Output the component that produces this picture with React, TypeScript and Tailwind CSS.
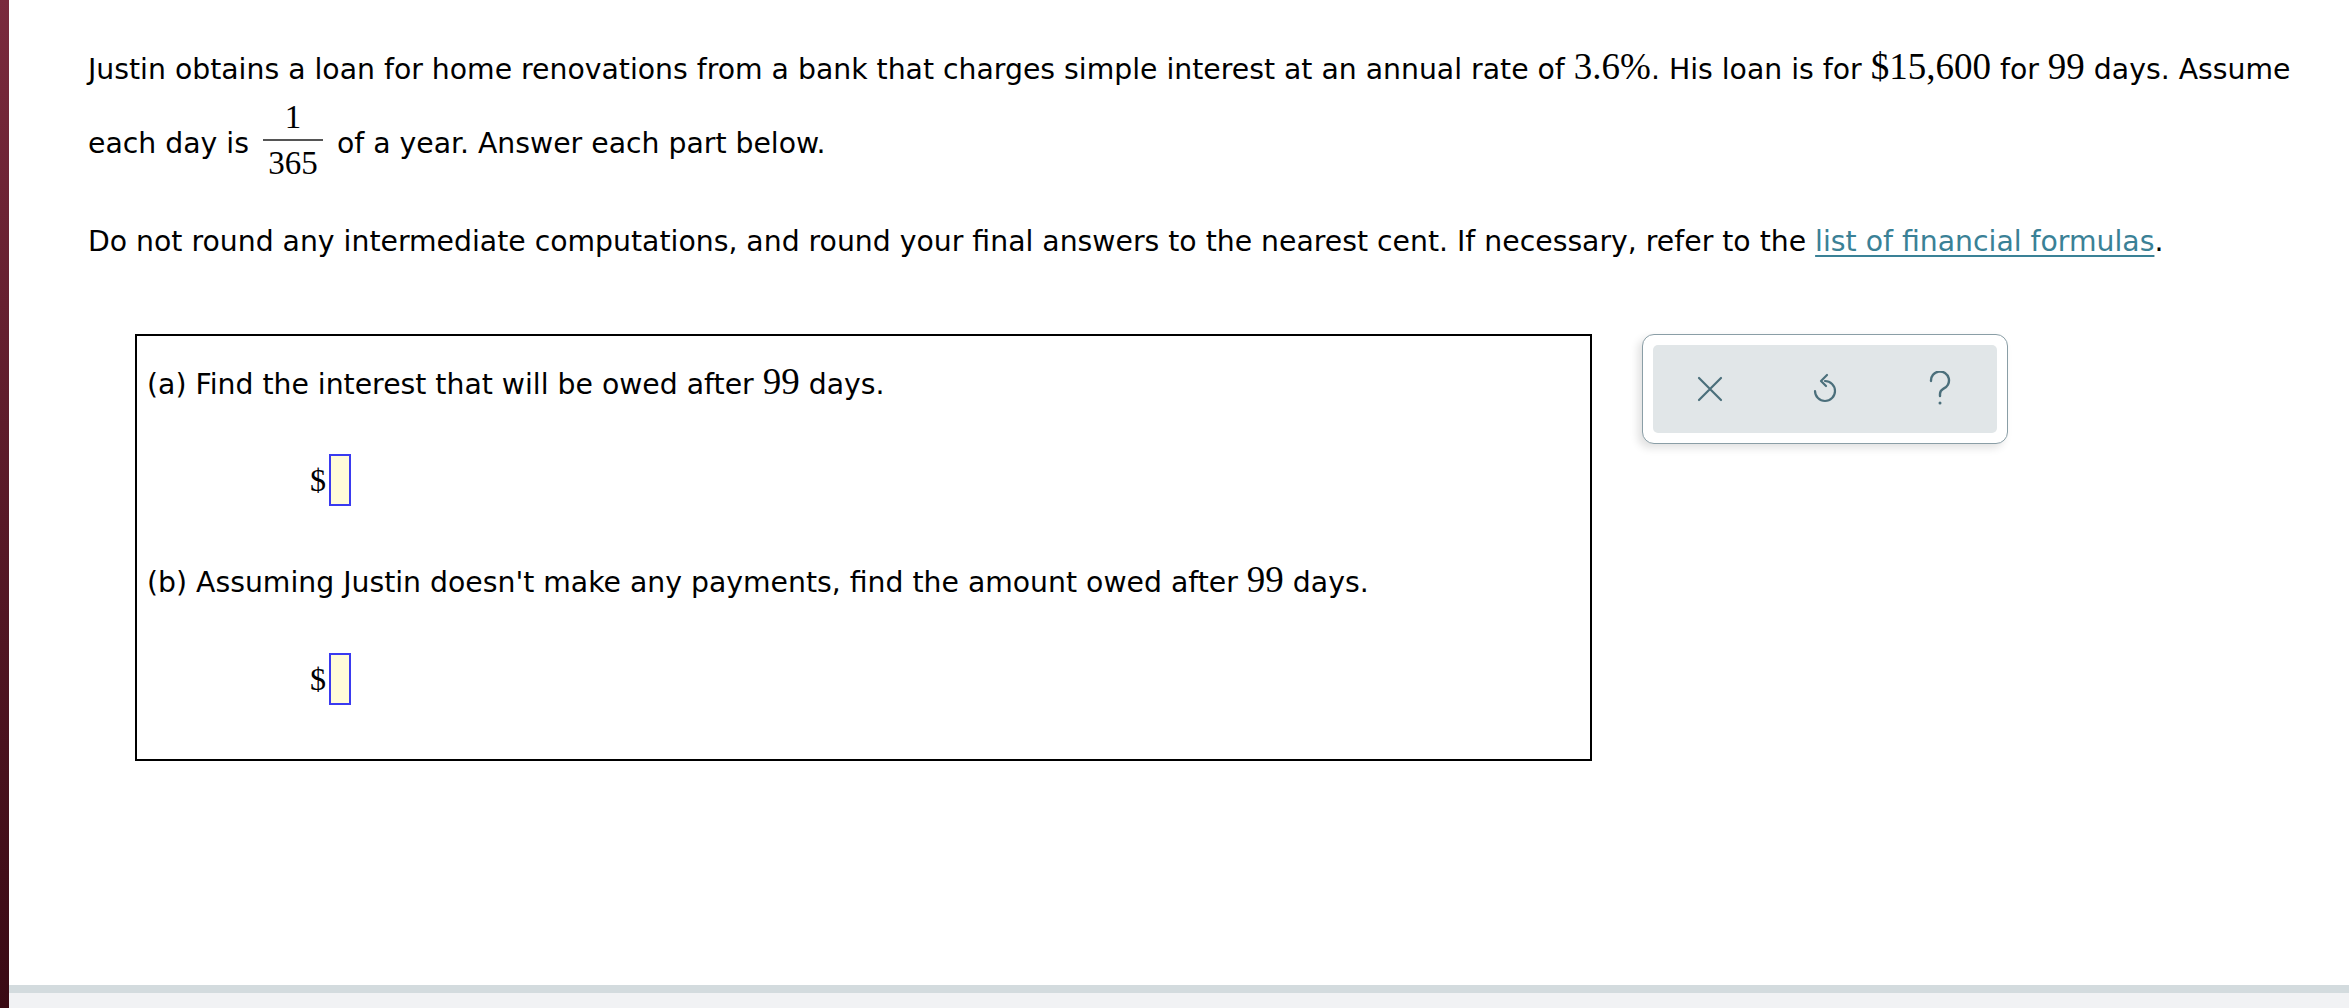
const sans = { fontFamily: '"DejaVu Sans", Verdana, sans-serif' };

function M({ children }: { children: React.ReactNode }) {
  return <span className="font-['Liberation_Serif','Times_New_Roman',serif] text-[37px] leading-[30px]">{children}</span>;
}

function Frac() {
  return (
    <span className="mx-[14px] inline-flex flex-col items-center font-['Liberation_Serif','Times_New_Roman',serif] text-[33px] leading-[28px]">
      <span>1</span>
      <span className="mt-[8px] mb-[8px] h-[2px] w-[60px] bg-[#555]" />
      <span>365</span>
    </span>
  );
}

function AnswerInput() {
  return (
    <div className="ml-[163px] flex items-center gap-[3px]">
      <span className="font-['Liberation_Serif','Times_New_Roman',serif] text-[32px] leading-none">$</span>
      <div className="h-[52px] w-[22px] border-2 border-[#3a3af0] bg-[#fffbd9]" />
    </div>
  );
}

function Toolbar() {
  return (
    <div className="ml-[50px] h-[110px] w-[366px] rounded-[12px] border-[1.5px] border-[#8a9ea6] bg-white p-[10px] shadow-[-4px_4px_8px_rgba(0,0,0,0.12)]">
      <div className="grid h-full grid-cols-3 place-items-center rounded-[5px] bg-[#e1e6e8] text-[#4b6f7b]">
        <svg width="28" height="28" viewBox="0 0 28 28" fill="none" stroke="currentColor" strokeWidth="2.2" strokeLinecap="round">
          <path d="M3 3 L25 25 M25 3 L3 25" />
        </svg>
        <svg width="30" height="34" viewBox="0 0 30 34" fill="none" stroke="currentColor" strokeWidth="2.2" strokeLinecap="round" strokeLinejoin="round">
          <path d="M15 9 A 10 10 0 1 1 5 19" />
          <path d="M17 3 L11 9 L16 14" />
        </svg>
        <svg width="24" height="36" viewBox="0 0 24 36" fill="none" stroke="currentColor" strokeWidth="2.4" strokeLinecap="round">
          <path d="M3 10 A 9 9 0 1 1 15 18 C 12.5 19.5 12 21 12 23 V 25" />
          <circle cx="12" cy="32" r="1.5" fill="currentColor" stroke="none" />
        </svg>
      </div>
    </div>
  );
}

export default function App() {
  return (
    <div className="flex h-[1008px] w-full overflow-hidden bg-white text-black" style={sans}>
      <div className="w-[9px] shrink-0 bg-gradient-to-b from-[#7a2a3d] to-[#3a0a14]" />
      <div className="flex min-w-0 flex-1 flex-col">
        <div className="flex-1 pl-[79px] text-[28.3px]">
          <div className="pt-[52px] leading-[30px] whitespace-nowrap">
            Justin obtains a loan for home renovations from a bank that charges simple interest at an annual rate of <M>3.6%</M>. His loan is for <M>$15,600</M> for <M>99</M> days. Assume
          </div>
          <div className="mt-[18px] flex items-center leading-[30px]">
            <span className="mt-[7px]">each day is</span>
            <Frac />
            <span className="mt-[7px]">of a year. Answer each part below.</span>
          </div>
          <div className="mt-[50px] leading-[30px]">
            Do not round any intermediate computations, and round your final answers to the nearest cent. If necessary, refer to the{" "}
            <a href="#" className="text-[#3a8196] underline underline-offset-[4px]">list of financial formulas</a>.
          </div>
          <div className="ml-[47px] mt-[77px] flex items-start">
            <div className="h-[427px] w-[1457px] border-2 border-black px-[10px] pt-[31px]">
              <div className="leading-[30px]">(a) Find the interest that will be owed after <M>99</M> days.</div>
              <div className="mt-[54px]"><AnswerInput /></div>
              <div className="mt-[59px] leading-[30px]">(b) Assuming Justin doesn't make any payments, find the amount owed after <M>99</M> days.</div>
              <div className="mt-[55px]"><AnswerInput /></div>
            </div>
            <Toolbar />
          </div>
        </div>
        <div className="h-[8px] bg-[#d3dbde]" />
        <div className="h-[15px] bg-[#f1f2f4]" />
      </div>
    </div>
  );
}
